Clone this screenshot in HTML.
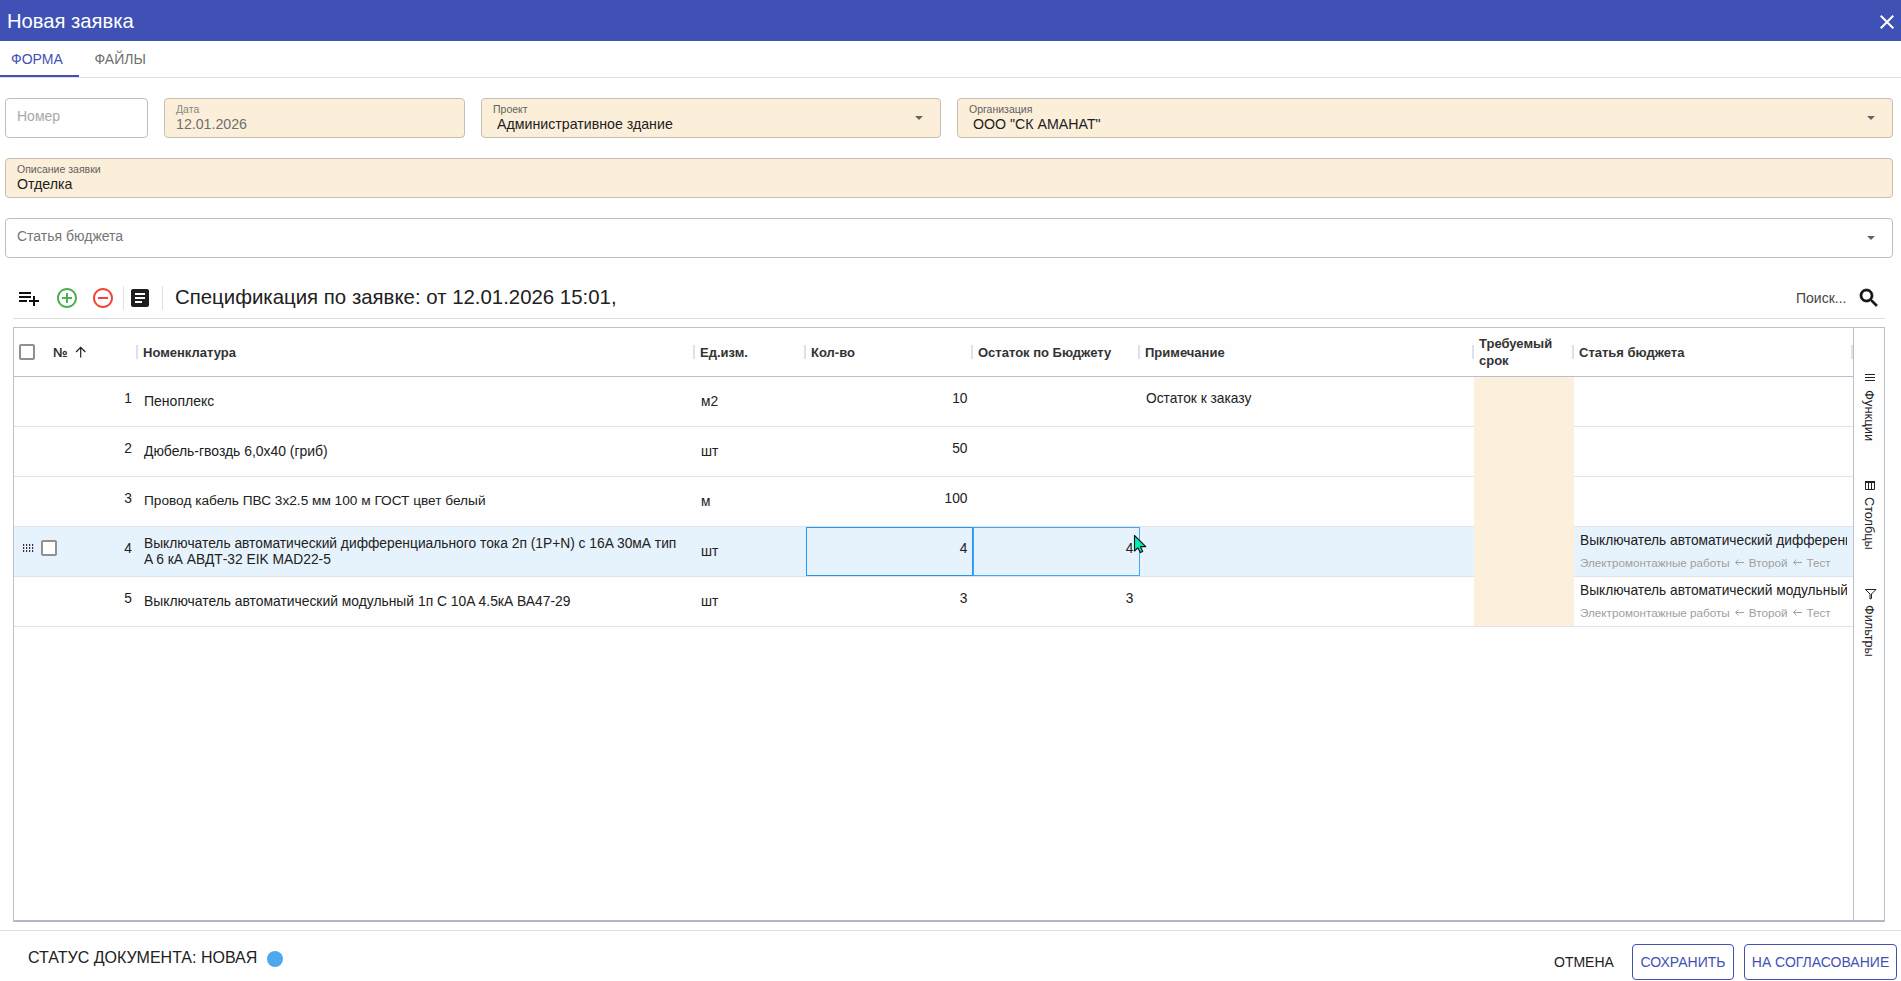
<!DOCTYPE html>
<html><head><meta charset="utf-8">
<style>
*{box-sizing:border-box;margin:0;padding:0}
html,body{width:1901px;height:981px;overflow:hidden;background:#fff;font-family:"Liberation Sans",sans-serif;color:#212121}
.a{position:absolute;white-space:nowrap}
.fld{position:absolute;height:40px;border:1px solid #bfbfbf;border-radius:4px;background:#fff}
.fld.b{background:#fcefda;border-color:#c7bfb1}
.lbl{position:absolute;font-size:10.5px;color:#616161;line-height:12px}
.val{position:absolute;font-size:14.2px;color:#212121;line-height:16px}
.arr{position:absolute;width:0;height:0;border-left:4.5px solid transparent;border-right:4.5px solid transparent;border-top:4.5px solid #666}
.t{font-size:13.75px;line-height:16px;color:#212121}
.th{font-size:13px;font-weight:bold;line-height:17px;color:#333}
.sep{position:absolute;top:345px;width:2px;height:14px;background:#dde2ea}
.rb{position:absolute;left:14px;width:1839px;height:1px;background:#dfe3ea}
.num{position:absolute;text-align:right}
.sub{font-size:11.7px;line-height:14px;color:#a0a0a0;white-space:nowrap}
.la{display:inline-block;width:9px;height:7px;vertical-align:1px;margin:0 1.5px 0 2px}
</style></head><body>
<div class="a" style="left:0;top:0;width:1901px;height:41px;background:#3f51b5"></div>
<div class="a" style="left:7px;top:10px;font-size:20.2px;line-height:23px;color:#fff">Новая заявка</div>
<svg class="a" style="left:1875px;top:10px" width="24" height="24" viewBox="0 0 24 24"><path d="M19 6.41L17.59 5 12 10.59 6.41 5 5 6.41 10.59 12 5 17.59 6.41 19 12 13.41 17.59 19 19 17.59 13.41 12z" fill="#fff"/></svg>
<div class="a" style="left:11px;top:51px;font-size:14px;line-height:16px;color:#3f51b5">ФОРМА</div>
<div class="a" style="left:94.5px;top:51px;font-size:14px;line-height:16px;color:#6f6f6f">ФАЙЛЫ</div>
<div class="a" style="left:0;top:77px;width:1901px;height:1px;background:#e0e0e0"></div>
<div class="a" style="left:0;top:75px;width:79px;height:2px;background:#3f51b5"></div>
<div class="fld" style="left:5px;top:98px;width:143px"></div>
<div class="a val" style="left:17px;top:108px;font-size:14px;color:#a8a8a8">Номер</div>
<div class="fld b" style="left:164px;top:98px;width:301px"></div>
<div class="a lbl" style="left:176px;top:103px;color:#858585">Дата</div>
<div class="a val" style="left:176px;top:116px;color:#6e6e6e">12.01.2026</div>
<div class="fld b" style="left:481px;top:98px;width:460px"></div>
<div class="a lbl" style="left:493px;top:103px">Проект</div>
<div class="a val" style="left:497px;top:116px">Административное здание</div>
<div class="arr" style="left:914.5px;top:116px"></div>
<div class="fld b" style="left:957px;top:98px;width:936px"></div>
<div class="a lbl" style="left:969px;top:103px">Организация</div>
<div class="a val" style="left:973px;top:116px">ООО "СК АМАНАТ"</div>
<div class="arr" style="left:1866.5px;top:116px"></div>
<div class="fld b" style="left:5px;top:158px;width:1888px"></div>
<div class="a lbl" style="left:17px;top:163px">Описание заявки</div>
<div class="a val" style="left:17px;top:176px">Отделка</div>
<div class="fld" style="left:5px;top:218px;width:1888px"></div>
<div class="a val" style="left:17px;top:228px;font-size:14px;color:#757575">Статья бюджета</div>
<div class="arr" style="left:1866.5px;top:236px"></div>
<svg class="a" style="left:17px;top:286px" width="24" height="24" viewBox="0 0 24 24"><path d="M14 10H2v2h12v-2zm0-4H2v2h12V6zm4 8v-4h-2v4h-4v2h4v4h2v-4h4v-2h-4zM2 16h8v-2H2v2z" fill="#111"/></svg>
<svg class="a" style="left:55px;top:286px" width="24" height="24" viewBox="0 0 24 24"><path d="M13 7h-2v4H7v2h4v4h2v-4h4v-2h-4V7zm-1-5C6.48 2 2 6.48 2 12s4.48 10 10 10 10-4.48 10-10S17.52 2 12 2zm0 18c-4.41 0-8-3.59-8-8s3.59-8 8-8 8 3.59 8 8-3.59 8-8 8z" fill="#4caf50"/></svg>
<svg class="a" style="left:91px;top:286px" width="24" height="24" viewBox="0 0 24 24"><path d="M7 11v2h10v-2H7zm5-9C6.48 2 2 6.48 2 12s4.48 10 10 10 10-4.48 10-10S17.52 2 12 2zm0 18c-4.41 0-8-3.59-8-8s3.59-8 8-8 8 3.59 8 8-3.59 8-8 8z" fill="#f44336"/></svg>
<div class="a" style="left:123px;top:286px;width:1px;height:24px;background:#e0e0e0"></div>
<svg class="a" style="left:128px;top:286px" width="24" height="24" viewBox="0 0 24 24"><path d="M19 3H5c-1.1 0-2 .9-2 2v14c0 1.1.9 2 2 2h14c1.1 0 2-.9 2-2V5c0-1.1-.9-2-2-2zm-5 14H7v-2h7v2zm3-4H7v-2h10v2zm0-4H7V7h10v2z" fill="#1e1e1e"/></svg>
<div class="a" style="left:162px;top:286px;width:1px;height:24px;background:#e0e0e0"></div>
<div class="a" style="left:175px;top:285px;font-size:20.4px;line-height:24px;color:#212121">Спецификация по заявке: от 12.01.2026 15:01,</div>
<div class="a" style="left:1796px;top:290px;font-size:14px;line-height:16px;color:#454545">Поиск...</div>
<svg class="a" style="left:1857px;top:286px" width="24" height="24" viewBox="0 0 24 24"><path d="M15.5 14h-.79l-.28-.27C15.41 12.59 16 11.11 16 9.5 16 5.91 13.09 3 9.5 3S3 5.91 3 9.5 5.91 16 9.5 16c1.61 0 3.09-.59 4.23-1.57l.27.28v.79l5 4.99L20.49 19l-4.99-5zm-6 0C7.01 14 5 11.99 5 9.5S7.01 5 9.5 5 14 7.01 14 9.5 11.99 14 9.5 14z" fill="#111" stroke="#111" stroke-width="0.7"/></svg>
<div class="a" style="left:13px;top:318px;width:1872px;height:1px;background:#e0e0e0"></div>
<div class="a" style="left:13px;top:327px;width:1872px;height:595px;border:1px solid #bcc1cb;border-bottom:2px solid #b3b9c4;background:#fefefe"></div>
<div class="a" style="left:14px;top:376px;width:1839px;height:1px;background:#b9bfca"></div>
<div class="a" style="left:1853px;top:328px;width:1px;height:592px;background:#bcc1cb"></div>
<div class="a" style="left:14px;top:527px;width:1839px;height:49px;background:#e7f3fc"></div>
<div class="rb" style="top:426px"></div>
<div class="rb" style="top:476px"></div>
<div class="rb" style="top:526px"></div>
<div class="rb" style="top:576px"></div>
<div class="rb" style="top:626px"></div>
<div class="a" style="left:1474px;top:377px;width:100px;height:249px;background:#fcefdb"></div>
<div class="sep" style="left:136px"></div>
<div class="sep" style="left:693px"></div>
<div class="sep" style="left:804px"></div>
<div class="sep" style="left:971px"></div>
<div class="sep" style="left:1138px"></div>
<div class="sep" style="left:1472px"></div>
<div class="sep" style="left:1572px"></div>
<div class="sep" style="left:1851px"></div>
<div class="a" style="left:19px;top:344px;width:16px;height:16px;border:2px solid #909090;border-radius:2px;background:#fff"></div>
<div class="a th" style="left:53px;top:344px">№</div>
<svg class="a" style="left:74px;top:346px" width="14" height="12" viewBox="0 0 14 12"><path d="M6.7 1.3V11.4M2.1 6L6.7 1.3 11.3 6" stroke="#1a1a1a" stroke-width="1.15" fill="none"/></svg>
<div class="a th" style="left:143px;top:344px">Номенклатура</div>
<div class="a th" style="left:700px;top:344px">Ед.изм.</div>
<div class="a th" style="left:811px;top:344px">Кол-во</div>
<div class="a th" style="left:978px;top:344px">Остаток по Бюджету</div>
<div class="a th" style="left:1145px;top:344px">Примечание</div>
<div class="a th" style="left:1579px;top:344px">Статья бюджета</div>
<div class="a th" style="left:1479px;top:335px">Требуемый<br>срок</div>
<div class="a t num" style="left:100px;width:32px;top:391px">1</div>
<div class="a t" style="left:144px;top:393px;font-size:14.03px">Пеноплекс</div>
<div class="a t" style="left:701px;top:394px">м2</div>
<div class="a t num" style="left:850px;width:117.5px;top:391px">10</div>
<div class="a t" style="left:1146px;top:391px">Остаток к заказу</div>
<div class="a t num" style="left:100px;width:32px;top:441px">2</div>
<div class="a t" style="left:144px;top:443px;font-size:13.93px">Дюбель-гвоздь 6,0x40 (гриб)</div>
<div class="a t" style="left:701px;top:444px">шт</div>
<div class="a t num" style="left:850px;width:117.5px;top:441px">50</div>
<div class="a t num" style="left:100px;width:32px;top:491px">3</div>
<div class="a t" style="left:144px;top:493px;font-size:13.67px">Провод кабель ПВС 3x2.5 мм 100 м ГОСТ цвет белый</div>
<div class="a t" style="left:701px;top:494px">м</div>
<div class="a t num" style="left:850px;width:117.5px;top:491px">100</div>
<div class="a t num" style="left:100px;width:32px;top:541px">4</div>
<div class="a t" style="left:144px;top:536px;line-height:16.4px;font-size:13.8px">Выключатель автоматический дифференциального тока 2п (1P+N) с 16A 30мА тип<br>A 6 кА АВДТ-32 EIK MAD22-5</div>
<div class="a t" style="left:701px;top:544px">шт</div>
<div class="a t num" style="left:850px;width:117.5px;top:541px">4</div>
<div class="a t num" style="left:1010px;width:123.5px;top:541px">4</div>
<div class="a" style="left:1580px;top:533px;width:267px;height:40px;overflow:hidden"><div class="t" style="white-space:nowrap">Выключатель автоматический дифференциального тока</div><div class="sub" style="margin-top:7px">Электромонтажные работы <svg class="la" viewBox="0 0 9 7"><path d="M0.6 3.5H9M3.5 0.6L0.6 3.5 3.5 6.4" stroke="#a0a0a0" stroke-width="1" fill="none"/></svg> Второй <svg class="la" viewBox="0 0 9 7"><path d="M0.6 3.5H9M3.5 0.6L0.6 3.5 3.5 6.4" stroke="#a0a0a0" stroke-width="1" fill="none"/></svg> Тест</div></div>
<div class="a t num" style="left:100px;width:32px;top:591px">5</div>
<div class="a t" style="left:144px;top:593px;font-size:13.86px">Выключатель автоматический модульный 1п C 10A 4.5кА ВА47-29</div>
<div class="a t" style="left:701px;top:594px">шт</div>
<div class="a t num" style="left:850px;width:117.5px;top:591px">3</div>
<div class="a t num" style="left:1010px;width:123.5px;top:591px">3</div>
<div class="a" style="left:1580px;top:583px;width:267px;height:40px;overflow:hidden"><div class="t" style="white-space:nowrap">Выключатель автоматический модульный 1п C 10A</div><div class="sub" style="margin-top:7px">Электромонтажные работы <svg class="la" viewBox="0 0 9 7"><path d="M0.6 3.5H9M3.5 0.6L0.6 3.5 3.5 6.4" stroke="#a0a0a0" stroke-width="1" fill="none"/></svg> Второй <svg class="la" viewBox="0 0 9 7"><path d="M0.6 3.5H9M3.5 0.6L0.6 3.5 3.5 6.4" stroke="#a0a0a0" stroke-width="1" fill="none"/></svg> Тест</div></div>
<svg class="a" style="left:22px;top:543px" width="13" height="10" viewBox="0 0 13 10"><rect x="1" y="1" width="1.2" height="2" fill="#3a2a4a"/><rect x="1" y="4" width="1.2" height="2" fill="#3a2a4a"/><rect x="1" y="7" width="1.2" height="2" fill="#3a2a4a"/><rect x="4" y="1" width="1.2" height="2" fill="#3a2a4a"/><rect x="4" y="4" width="1.2" height="2" fill="#3a2a4a"/><rect x="4" y="7" width="1.2" height="2" fill="#3a2a4a"/><rect x="7" y="1" width="1.2" height="2" fill="#3a2a4a"/><rect x="7" y="4" width="1.2" height="2" fill="#3a2a4a"/><rect x="7" y="7" width="1.2" height="2" fill="#3a2a4a"/><rect x="10" y="1" width="1.2" height="2" fill="#3a2a4a"/><rect x="10" y="4" width="1.2" height="2" fill="#3a2a4a"/><rect x="10" y="7" width="1.2" height="2" fill="#3a2a4a"/></svg>
<div class="a" style="left:41px;top:540px;width:16px;height:16px;border:2px solid #909090;border-radius:2px;background:#fff"></div>
<div class="a" style="left:806px;top:527px;width:167px;height:49px;border:1px solid #2196f3"></div>
<div class="a" style="left:973px;top:527px;width:167px;height:49px;border:1px solid #42a5f5"></div>
<svg class="a" style="left:1864px;top:372px" width="13" height="11" viewBox="0 0 13 11"><path d="M1 2.5H11M1 5.5H11M1 8.5H11" stroke="#222" stroke-width="1"/></svg>
<div class="a" style="left:1876px;top:389.5px;transform-origin:0 0;transform:rotate(90deg);font-size:13px;line-height:14px;color:#222">Функции</div>
<svg class="a" style="left:1864px;top:480px" width="13" height="11" viewBox="0 0 13 11"><path d="M1.5 1.5H10.5V9.5H1.5Z" stroke="#222" stroke-width="1" fill="none"/><path d="M1 2H11" stroke="#222" stroke-width="2"/><path d="M4.5 2V9.5M7.5 2V9.5" stroke="#222" stroke-width="1"/></svg>
<div class="a" style="left:1876px;top:497px;transform-origin:0 0;transform:rotate(90deg);font-size:12.7px;line-height:14px;color:#222">Столбцы</div>
<svg class="a" style="left:1864px;top:588px" width="13" height="12" viewBox="0 0 13 12"><path d="M1.5 1.5H12L7.5 6V10.5L6 11V6Z" stroke="#222" stroke-width="1" fill="none" stroke-linejoin="miter"/></svg>
<div class="a" style="left:1876px;top:605px;transform-origin:0 0;transform:rotate(90deg);font-size:12.7px;line-height:14px;color:#222">Фильтры</div>
<svg class="a" style="left:1133px;top:534px" width="16" height="22" viewBox="0 0 16 22"><path d="M1.5 1.5 L1.5 17 L4.8 13.8 L7.3 18.6 L9.7 17.5 L7.4 12.6 L12.8 12.6 Z" fill="#00f0b4" stroke="#111" stroke-width="1.1" stroke-linejoin="round"/></svg>
<div class="a" style="left:0;top:930px;width:1901px;height:1px;background:#e0e0e0"></div>
<div class="a" style="left:28px;top:949px;font-size:16px;line-height:18px;color:#212121">СТАТУС ДОКУМЕНТА: НОВАЯ</div>
<div class="a" style="left:267px;top:951px;width:16px;height:16px;border-radius:50%;background:#4da8ee"></div>
<div class="a" style="left:1554px;top:954px;font-size:14px;line-height:16px;color:#212121">ОТМЕНА</div>
<div class="a" style="left:1632px;top:944px;width:102px;height:36px;border:1px solid #3f51b5;border-radius:4px;font-size:14px;line-height:34px;color:#3f51b5;text-align:center">СОХРАНИТЬ</div>
<div class="a" style="left:1744px;top:944px;width:153px;height:36px;border:1px solid #3f51b5;border-radius:4px;font-size:14px;line-height:34px;color:#3f51b5;text-align:center">НА СОГЛАСОВАНИЕ</div>
</body></html>
